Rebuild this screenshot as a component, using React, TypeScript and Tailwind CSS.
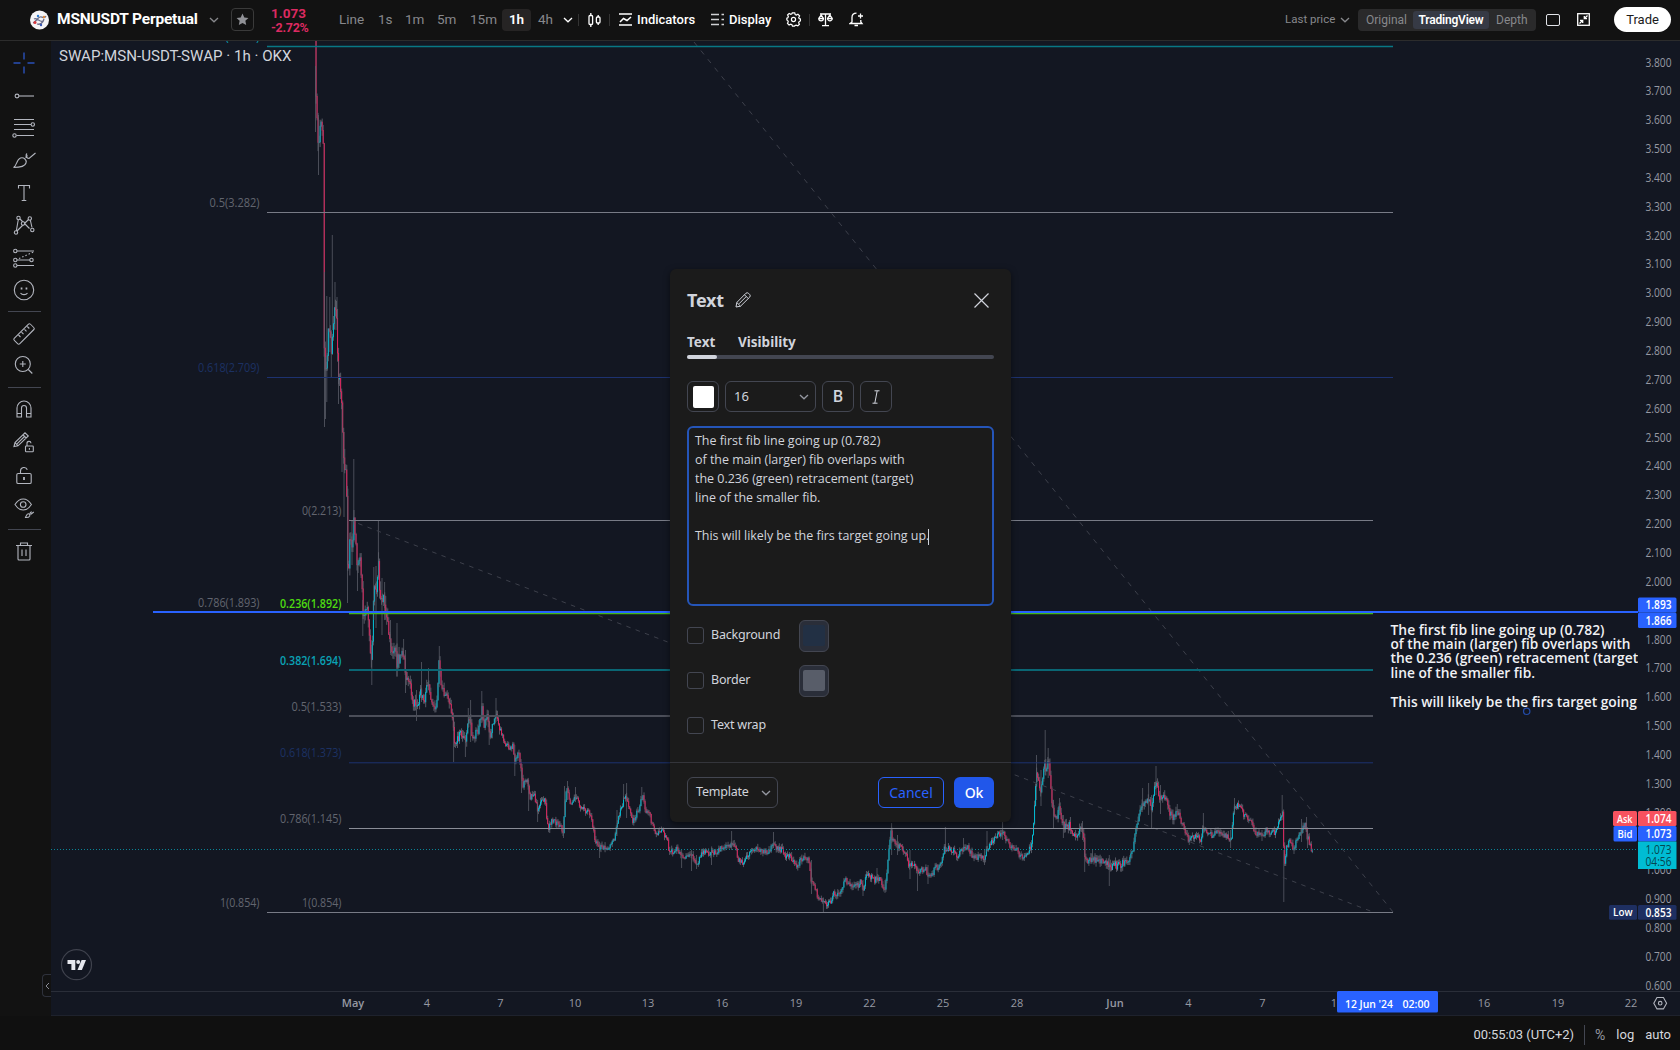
import React from 'react';

interface FibLevel {
  label: string;
  y: number;
  color: string;
  textColor: string;
  width?: number;
  bold?: boolean;
}

const LARGE_FIB: FibLevel[] = [
  { label: '0.382(3.854)', y: 46.5, color: '#087785', textColor: '#0a9fb1', width: 1.6 },
  { label: '0.5(3.282)', y: 212.5, color: '#787b86', textColor: '#62656f' },
  { label: '0.618(2.709)', y: 377.5, color: '#1d3270', textColor: '#1c3162' },
  { label: '0.786(1.893)', y: 612.5, color: '#131722', textColor: '#62656f' },
  { label: '1(0.854)', y: 912.5, color: '#787b86', textColor: '#62656f' },
];

const SMALL_FIB: FibLevel[] = [
  { label: '0(2.213)', y: 520.5, color: '#787b86', textColor: '#62656f' },
  { label: '0.236(1.892)', y: 613.5, color: '#43b81a', textColor: '#4ddb10', bold: true, width: 1.4 },
  { label: '0.382(1.694)', y: 670, color: '#0a6674', textColor: '#0aa2b5', width: 1.8, bold: true },
  { label: '0.5(1.533)', y: 716, color: '#4b4e59', textColor: '#62656f', width: 1.8 },
  { label: '0.618(1.373)', y: 762.8, color: '#1d3270', textColor: '#1c3162' },
  { label: '0.786(1.145)', y: 828.5, color: '#8a8d97', textColor: '#62656f' },
  { label: '1(0.854)', y: 912.5, color: '#787b86', textColor: '#62656f' },
];

// x / y pairs the price runs through
const PATH: number[] = [
  315, 20, 316, 98, 317, 115, 318.5, 144, 320, 122, 322, 121, 323.3, 150, 323.6, 281, 324.5, 380, 327, 360, 328, 335, 330, 326,
  331, 352, 333, 325, 335, 308, 336, 307, 337, 326, 338, 375, 340, 380, 342, 405, 343, 442, 344.5, 465, 346, 463, 347, 505,
  348, 575, 350, 542, 352, 552, 354, 522, 356, 550, 358, 568, 360, 555, 361.5, 575, 363, 615, 365, 610, 366.5, 605, 368, 612,
  370, 640, 371.3, 662, 373, 620, 374, 585, 376, 592, 378.5, 562, 380, 605, 382, 595, 385, 605, 387, 620, 390, 640, 393, 655,
  395, 645, 397, 662, 400, 655, 404, 653, 406, 680, 410, 678, 413, 710, 415, 700, 418, 705, 420, 692, 424, 702, 428, 680,
  431, 700, 435, 705, 437, 700, 439, 660, 441, 680, 444, 692, 449, 702, 453, 718, 454, 740, 457, 738, 461, 735, 465, 742,
  469, 715, 472, 735, 477, 733, 480, 722, 482, 708, 484, 725, 487, 715, 490, 735, 493, 725, 496, 716, 500, 728, 505, 742,
  509, 748, 513, 745, 515, 763, 518.5, 750, 521, 770, 523, 785, 527, 780, 530, 797, 534, 795, 538, 810, 541, 798, 545, 800,
  548, 828, 552, 820, 556, 822, 560, 825, 563, 834, 564.5, 808, 566, 790, 567.5, 785, 570, 805, 573, 804, 575.5, 795,
  578, 802, 582, 808, 586, 812, 590, 812, 593, 826, 595, 840, 599, 848, 603, 847, 606, 850, 609, 846, 613, 842, 616, 832,
  618, 818, 622, 805, 625, 795, 628, 803, 632, 820, 635, 818, 639, 808, 642.5, 795, 645, 808, 650, 815, 653, 828, 658, 834,
  661, 830, 667, 838, 669, 851, 673, 852, 676, 848, 680, 852, 684, 856, 688, 858, 691, 852, 694, 860, 697, 865, 701, 853,
  705, 850, 709, 855, 713, 852, 717, 852, 721, 848, 726, 845, 730, 846, 733, 843, 736, 850, 739, 861, 743, 862, 747, 855,
  751, 850, 762, 850, 768, 852, 773, 846, 777, 848, 782, 850, 786, 857, 790, 856, 794, 863, 797, 866, 800, 860, 805, 857,
  809, 860, 811, 882, 815, 887, 819, 900, 825, 904, 830, 902, 834, 893, 838, 893, 842, 890, 845, 880, 849, 883, 858, 886,
  861, 880, 863, 892, 866, 876, 870, 876, 875, 880, 880, 877, 885, 892, 887, 870, 889, 848, 891, 830, 892, 838, 895, 845,
  901, 846, 905, 852, 909, 865, 913, 864, 918, 870, 926, 870, 928, 877, 932, 875, 935, 868, 940, 865, 944, 848, 953, 850,
  958, 856, 963, 849, 968, 848, 973, 856, 984, 858, 987, 848, 993, 840, 998, 835, 1003, 832, 1008, 842, 1013, 848,
  1017, 850, 1022, 858, 1026, 856, 1031, 845, 1033, 830, 1035, 800, 1036, 770, 1037.5, 775, 1040, 792, 1043, 780, 1044.5, 765,
  1047, 772, 1048.5, 760, 1050, 775, 1052, 800, 1054, 815, 1056, 820, 1059, 808, 1062, 822, 1066, 828, 1070, 825, 1074, 835,
  1078, 833, 1082, 828, 1084, 840, 1085, 858, 1089, 860, 1099, 860, 1104, 862, 1108, 863, 1110, 868, 1113, 864, 1118, 866,
  1124, 862, 1130, 857, 1134, 845, 1136, 825, 1139, 818, 1142, 805, 1146, 800, 1150, 802, 1152, 808, 1155, 785, 1157, 782,
  1159, 798, 1162, 800, 1165, 797, 1169, 810, 1174, 818, 1177, 808, 1181, 820, 1185, 832, 1189, 840, 1193, 836, 1197, 834,
  1201, 840, 1203, 828, 1208, 832, 1213, 836, 1217, 830, 1221, 834, 1226, 836, 1231, 840, 1233, 815, 1235, 805, 1239, 806,
  1244, 815, 1250, 818, 1254, 830, 1258, 834, 1262, 835, 1266, 830, 1270, 832, 1276, 833, 1279, 820, 1282, 812, 1283, 816,
  1284, 865, 1287, 845, 1290, 842, 1294, 848, 1298, 838, 1302, 830, 1305, 825, 1307, 835, 1310, 845, 1312.5, 852,
];

// long single wicks: x, top, bottom
const SPIKES: number[][] = [
  [315.5, 66, 132], [318.5, 115, 175], [324.5, 272, 427], [325.5, 357, 419], [326.8, 296, 402], [329.8, 297, 352], [332.3, 235, 330],
  [331.3, 330, 377], [335, 282, 330], [337, 297, 330], [338.5, 361, 404], [342, 405, 472], [344, 432, 517], [347.5, 486, 603],
  [353.8, 459, 525], [352, 520, 565], [357.5, 560, 591], [362.8, 600, 636], [371.8, 640, 685], [373.8, 567, 620], [376, 566, 628],
  [378.4, 521, 580], [382, 578, 635], [384.6, 582, 620], [390.5, 620, 653], [397, 623, 677], [405.5, 650, 693], [403.6, 639, 655],
  [416.5, 690, 721], [421.5, 662, 702], [428.5, 668, 690], [439.3, 646, 670], [453.6, 715, 762], [465.4, 735, 757], [468.3, 708, 728],
  [470.6, 700, 742], [481.8, 691, 720], [489.2, 715, 745], [496, 698, 722], [514.8, 745, 776], [521.5, 770, 793], [528.6, 780, 811],
  [537.6, 800, 822], [563.5, 820, 838], [564.5, 786, 815], [567.5, 781, 800], [575.5, 787, 800], [599.6, 842, 858], [617, 810, 836],
  [623.6, 784, 800], [626.6, 783, 818], [641.8, 787, 800], [681.6, 850, 868], [691.5, 850, 871], [696.5, 855, 869], [711.5, 848, 865],
  [731.6, 831, 850], [773.5, 832, 848], [811.5, 860, 894], [823.4, 900, 912], [863, 880, 896], [877, 868, 882], [885, 880, 893],
  [891.6, 823, 855], [897.5, 835, 855], [910, 850, 879], [917.5, 868, 891], [928, 865, 884], [945.4, 827, 850], [963.5, 838, 852],
  [984.5, 850, 865], [987, 831, 852], [1002.6, 822, 840], [1036.5, 755, 800], [1045.2, 730, 775], [1048.2, 748, 778], [1041, 770, 806],
  [1053.5, 800, 829], [1059.5, 798, 815], [1063.4, 815, 838], [1082.5, 821, 840], [1084.7, 840, 872], [1092.5, 850, 862],
  [1109.3, 855, 886], [1142.6, 788, 810], [1148.6, 783, 815], [1151.6, 795, 829], [1156, 766, 795], [1160.5, 785, 814],
  [1177.3, 804, 812], [1189.3, 835, 845], [1203.4, 813, 832], [1230.6, 830, 848], [1234.5, 798, 815], [1262, 830, 841],
  [1282.2, 795, 820], [1283.8, 850, 902], [1294, 845, 854], [1301.5, 819, 842], [1306.5, 817, 832], [1307.5, 830, 848],
];

interface Candle {
  x: number;
  open: number;
  close: number;
  high: number;
  low: number;
}

const buildCandles = (): Candle[] => {
  let seed = 77;
  const random = () => {
    seed = (seed * 16807) % 2147483647;
    return seed / 2147483647;
  };
  const candles: Candle[] = [];
  let i = 0;
  let open = PATH[1];
  for (let x = PATH[0]; x <= 1312.5; x += 1.025) {
    while (i < PATH.length - 4 && PATH[i + 2] <= x) i += 2;
    const t = Math.min(1, (x - PATH[i]) / (PATH[i + 2] - PATH[i]));
    const mid = PATH[i + 1] + (PATH[i + 3] - PATH[i + 1]) * t;
    const amp = x < 400 ? 9 : x < 500 ? 6 : x > 1030 && x < 1180 ? 5 : 3.8;
    const close = mid + (random() - 0.5) * amp * 1.5;
    candles.push({
      x,
      open,
      close,
      high: Math.min(open, close) - random() * amp,
      low: Math.max(open, close) + random() * amp,
    });
    open = close;
  }
  return candles;
};

const CANDLES = buildCandles();

const PRICES = Array.from({ length: 33 }, (_, i) => ({
  label: (3.8 - i * 0.1).toFixed(3),
  y: 62.3 + i * 28.85,
})).filter((p) => p.label !== '1.900' && p.label !== '1.100');

const DATES: [string, number][] = [
  ['May', 353], ['4', 427], ['7', 500.5], ['10', 575], ['13', 648], ['16', 722], ['19', 796], ['22', 869.5], ['25', 943],
  ['28', 1017], ['Jun', 1115], ['4', 1188.5], ['7', 1262.5], ['10', 1337], ['16', 1484], ['19', 1558], ['22', 1631],
];

const NOTE = [
  { text: 'The first fib line going up (0.782)', y: 634.8, width: 214 },
  { text: 'of the main (larger) fib overlaps with', y: 649, width: 240 },
  { text: 'the 0.236 (green) retracement (target)', y: 663.4, width: 252 },
  { text: 'line of the smaller fib.', y: 677.8, width: 144.5 },
  { text: 'This will likely be the firs target going', y: 706.6, width: 246.5 },
];

const Chevron: React.FC<{ className?: string }> = ({ className }) => (
  <svg className={className} width="10" height="6" viewBox="0 0 10 6" fill="none" stroke="currentColor" strokeWidth="1.3">
    <path d="M1 1l4 3.8L9 1" />
  </svg>
);

const FibLabels: React.FC<{ levels: FibLevel[]; x: number }> = ({ levels, x }) => (
  <g fontSize="12" textAnchor="end">
    {levels.map((l) => (
      <text
        key={l.label}
        x={x}
        y={l.y - 5.4}
        fill={l.textColor}
        fontWeight={l.bold ? 600 : 400}
        textLength={l.label.length === 12 ? 61.5 : l.label.length === 10 ? 50 : 39.5}
        lengthAdjust="spacingAndGlyphs"
      >
        {l.label}
      </text>
    ))}
  </g>
);

const PriceTag: React.FC<{ y: number; h: number; fill: string; value: string; name?: string; nameX?: number }> = ({ y, h, fill, value, name, nameX = 0 }) => (
  <g fontSize="12" fontWeight="600" fill="#fff">
    <rect x="1638" y={y} width="38.5" height={h} rx="1.5" fill={fill} />
    <text x="1645.5" y={y + h / 2 + 4.3} textLength="26" lengthAdjust="spacingAndGlyphs">{value}</text>
    {name && (
      <>
        <rect x={nameX} y={y} width={1637 - nameX} height={h} rx="1.5" fill={fill} />
        <text x={nameX + 4} y={y + h / 2 + 4} fontSize="11.5" textLength={1637 - nameX - 8.5} lengthAdjust="spacingAndGlyphs">{name}</text>
      </>
    )}
  </g>
);

const Chart: React.FC = () => (
  <svg
    className="block"
    width="1629"
    height="975"
    viewBox="51 41 1629 975"
    fontFamily="'Open Sans', 'Noto Sans', sans-serif"
  >
    <defs>
      <clipPath id="pane">
        <rect x="51" y="41" width="1587" height="950" />
      </clipPath>
    </defs>
    <rect x="51" y="41" width="1629" height="975" fill="#131722" />
    <g clipPath="url(#pane)">
      {CANDLES.map((c, i) => (
        <g key={i}>
          <line x1={c.x} x2={c.x} y1={c.high} y2={c.low} stroke="#5d606b" strokeWidth="0.9" />
          <line
            x1={c.x}
            x2={c.x}
            y1={Math.min(c.open, c.close)}
            y2={Math.max(c.open, c.close) + 0.6}
            stroke={c.close > c.open ? '#e0245e' : '#00bcd4'}
            strokeWidth="1"
          />
        </g>
      ))}
      {SPIKES.map(([x, top, bottom]) => (
        <line key={`${x}-${top}`} x1={x} x2={x} y1={top} y2={bottom} stroke="#5d606b" strokeWidth="1" opacity="0.75" />
      ))}
      <g stroke="#3d404b" strokeDasharray="4.5 5.4">
        <line x1="349" y1="520" x2="1373" y2="912" />
        <line x1="694" y1="42" x2="1393" y2="912" strokeDasharray="5 6" />
      </g>
      {LARGE_FIB.map((l) => (
        <line key={l.label} x1="267" x2="1393" y1={l.y} y2={l.y} stroke={l.color} strokeWidth={l.width ?? 1} />
      ))}
      {SMALL_FIB.map((l) => (
        <line key={l.label} x1="349" x2="1373" y1={l.y} y2={l.y} stroke={l.color} strokeWidth={l.width ?? 1} />
      ))}
      <line x1="153" x2="1638" y1="612" y2="612" stroke="#2962ff" strokeWidth="2" />
      <line x1="51" x2="1638" y1="849.5" y2="849.5" stroke="#0b8496" strokeDasharray="1 2" />
      <FibLabels levels={LARGE_FIB} x={259.5} />
      <FibLabels levels={SMALL_FIB} x={341.5} />
      <g fill="#f0f1f4" fontSize="14" fontWeight="600">
        {NOTE.map((n) => (
          <text key={n.y} x="1390.5" y={n.y} textLength={n.width} lengthAdjust="spacingAndGlyphs">{n.text}</text>
        ))}
      </g>
      <circle cx="1526.7" cy="711.3" r="3.2" fill="#131722" stroke="#234ba8" strokeWidth="1.2" />
    </g>

    <text x="59" y="60.8" fontSize="15.5" fill="#d1d4dc" fontFamily="Roboto, sans-serif" textLength="232.5" lengthAdjust="spacingAndGlyphs">
      SWAP:MSN-USDT-SWAP · 1h · OKX
    </text>

    <circle cx="76.5" cy="964.7" r="15" fill="#131722" stroke="#3f424d" strokeWidth="1.2" />
    <path d="M67.5 960h7.8v10h-3.9v-6h-3.9z" fill="#e6e8ee" />
    <circle cx="78.2" cy="962" r="2" fill="#e6e8ee" />
    <path d="M81.6 960h4.4l-4.1 10h-4.4z" fill="#e6e8ee" />

    <g fontSize="12" fill="#9699a3">
      {PRICES.map((p) => (
        <text key={p.label} x="1645.5" y={p.y + 4.2} textLength="26" lengthAdjust="spacingAndGlyphs">{p.label}</text>
      ))}
    </g>
    <PriceTag y={597.5} h={15} fill="#2962ff" value="1.893" />
    <PriceTag y={612.5} h={15.5} fill="#2962ff" value="1.866" />
    <PriceTag y={811} h={15} fill="#f7525f" value="1.074" name="Ask" nameX={1613} />
    <PriceTag y={826} h={15.5} fill="#2962ff" value="1.073" name="Bid" nameX={1613.5} />
    <g fontSize="12" fill="#06454f">
      <rect x="1638" y="841.5" width="38.5" height="27.5" fill="#00bcd4" />
      <text x="1645.5" y="853.6" textLength="26" lengthAdjust="spacingAndGlyphs">1.073</text>
      <text x="1645.5" y="866.2" textLength="26" lengthAdjust="spacingAndGlyphs">04:56</text>
    </g>
    <PriceTag y={905} h={14.7} fill="#1e2f61" value="0.853" name="Low" nameX={1609} />

    <path d="M51 991.5H1680M51 1016H1680" stroke="#2a2e39" />
    <g fontSize="11" fill="#9699a3" textAnchor="middle">
      {DATES.map(([d, x]) => (
        <text key={x} x={x} y="1007" fontWeight={d === 'May' || d === 'Jun' ? 600 : 400}>{d}</text>
      ))}
    </g>
    <rect x="1337" y="991" width="101" height="21.5" rx="1.5" fill="#2962ff" />
    <g fontSize="11.5" fontWeight="600" fill="#fff">
      <text x="1345" y="1008" textLength="48" lengthAdjust="spacingAndGlyphs">12 Jun '24</text>
      <text x="1402.5" y="1008" textLength="27" lengthAdjust="spacingAndGlyphs">02:00</text>
    </g>
    <g fill="none" stroke="#b2b5be" strokeWidth="1.1">
      <path d="M1657 997.5h6.4l3.2 5.7-3.2 5.7H1657l-3.2-5.7z" />
      <circle cx="1660.2" cy="1003.2" r="1.8" />
    </g>
  </svg>
);

const ToolIcon: React.FC<{ className: string; color?: string; children: React.ReactNode }> = ({ className, color = 'text-[#b2b5be]', children }) => (
  <button className={`flex w-full shrink-0 items-center justify-center ${className} ${color}`}>
    <svg width="24" height="24" viewBox="0 0 24 24" fill="none" stroke="currentColor" strokeWidth="1.1">
      {children}
    </svg>
  </button>
);

const Separator: React.FC<{ className: string }> = ({ className }) => <div className={`h-px w-[33px] shrink-0 bg-[#434651] ${className}`} />;

const Sidebar: React.FC = () => (
  <aside className="relative flex w-[51px] shrink-0 flex-col items-center bg-[#121212] pt-1.5 pr-[3px]">
    <ToolIcon className="h-[32.4px]" color="text-[#2a50b8]">
      <path d="M12 1.5v7M12 15.5v7M1.5 12h7M15.5 12h7" strokeWidth="1.4" />
    </ToolIcon>
    <ToolIcon className="h-[32.4px]">
      <circle cx="5" cy="12" r="1.9" />
      <path d="M7 12h15" />
    </ToolIcon>
    <ToolIcon className="h-[32.4px]">
      <path d="M2 3.5h20M2 8.5h17M2 13.5h20M4.5 19.500H22" />
      <circle cx="20.8" cy="8.5" r="1.7" />
      <circle cx="2.5" cy="19.5" r="1.7" />
    </ToolIcon>
    <ToolIcon className="h-[32.4px]">
      <path d="M1.5 19.5c3-1 3-8 7-9.5 3.5-1 6.500 2 5.500 5-1 3.500-5 4.500-12.500 4.500z" />
      <path d="M15 5.500c-2 2-.5 5 2 5l6.500-5.500M13.500 9.500l2-2" />
    </ToolIcon>
    <ToolIcon className="h-[32.4px]">
      <path d="M6.500 7.500V4.500h11v3M12 4.500v15M9.700 19.500h4.600" />
    </ToolIcon>
    <ToolIcon className="h-[32.4px]">
      <path d="M4.300 18L6.300 6.500M8 6l9.500 9.500M16.500 6.500L5 18M18.300 7l1.700 7.500" />
      <circle cx="6.5" cy="5" r="1.7" fill="#121212" />
      <circle cx="17.8" cy="5.5" r="1.7" fill="#121212" />
      <circle cx="11" cy="10.5" r="1.7" fill="#121212" />
      <circle cx="4" cy="19.5" r="1.7" fill="#121212" />
      <circle cx="20.3" cy="17" r="1.7" fill="#121212" />
    </ToolIcon>
    <ToolIcon className="h-[32.4px]">
      <path d="M5 5h17M5 14h13M5 19.500h17" />
      <path d="M7 12.500L21.500 6" strokeDasharray="1.5 2" />
      <circle cx="3.3" cy="5" r="1.7" />
      <circle cx="3.3" cy="14" r="1.7" />
      <circle cx="19.5" cy="14" r="1.7" />
      <circle cx="3.3" cy="19.5" r="1.7" />
    </ToolIcon>
    <ToolIcon className="h-[32.4px]">
      <circle cx="12" cy="12" r="9.7" />
      <path d="M8.500 15c1.500 2.200 5.500 2.200 7 0" />
      <path d="M8.700 10.500h1.700M13.600 10.500h1.700" strokeWidth="1.8" />
    </ToolIcon>
    <Separator className="mt-[5px] mb-1.5" />
    <ToolIcon className="h-[31px]">
      <rect x="-1" y="8.2" width="26" height="7.6" rx="1.5" transform="rotate(-45 12 12) translate(1.5 0) scale(.88 1)" />
      <path d="M6.500 13l2 2M9.500 10.200l2 2M12.500 7.300l2 2M15.300 4.500l2 2" />
    </ToolIcon>
    <ToolIcon className="h-[31px]">
      <circle cx="10.8" cy="11" r="7.5" />
      <path d="M16.300 16.500l4 4M7.800 11h6M10.800 8v6" />
    </ToolIcon>
    <Separator className="mt-[7px] mb-1" />
    <ToolIcon className="h-[33px]">
      <path d="M5 20V11a7 7 0 0 1 14 0v9h-4.500v-9a2.500 2.500 0 0 0-5 0v9zM5 16.500h4.500M14.500 16.500H19" />
    </ToolIcon>
    <ToolIcon className="h-[33px]">
      <path d="M2 16.500l1-4L13 2.800l3.300 3.200L6 15.800zM3 12.500l3 3.300M11 4.800l3.200 3.200M5 13.800l8-7.800" />
      <rect x="13.5" y="16" width="7.8" height="5.8" rx=".8" />
      <path d="M15 16v-2.500a2 2 0 0 1 4-.3M17.400 18v1.800" />
    </ToolIcon>
    <ToolIcon className="h-[33px]">
      <rect x="4.8" y="10.5" width="14.4" height="10" rx="1.3" />
      <path d="M8.500 10.500V8a3.500 3.500 0 0 1 6.800-1.200" />
      <path d="M12 14v3" strokeWidth="1.8" />
    </ToolIcon>
    <ToolIcon className="h-[33px]">
      <path d="M3 8.500C5.500 4.500 8 3 11.200 3s5.700 1.500 8.200 5.500c-2.500 4-5 5.500-8.200 5.500S5.500 12.500 3 8.500z" />
      <circle cx="11.2" cy="8.5" r="2.8" />
      <path d="M13 21.500c1.300-.3 1.200-3.500 3.200-3.700 1.300-.1 2 1.200 1.400 2.400-.7 1.200-2.500 1.500-4.600 1.300zM18 17.800c0-1.500 1-1 1.500-2.300M18.500 18.500l3.300-2.500" />
    </ToolIcon>
    <Separator className="mt-[5px] mb-[5px]" />
    <ToolIcon className="h-8">
      <path d="M4 6.500h16M8.500 6.500V4h7v2.500M6 6.500v13.500a1 1 0 0 0 1 1h10a1 1 0 0 0 1-1V6.500M10 10.500v6.500M14 10.500v6.500" />
    </ToolIcon>
    <div className="absolute right-0 bottom-[19px] flex h-[23px] w-[9px] items-center justify-center rounded-l border border-r-0 border-[#2e313b] text-[#8a8d97]">
      <svg width="5" height="8" viewBox="0 0 5 8" fill="none" stroke="currentColor"><path d="M4 1L1 4l3 3" /></svg>
    </div>
  </aside>
);

const Divider: React.FC<{ className: string }> = ({ className }) => <div className={`h-3 w-px bg-[#333] ${className}`} />;

const Header: React.FC = () => (
  <header className="flex h-[41px] items-center border-b border-[#2c2c2c] bg-[#121212] pb-px pl-[30px] pr-[9px] text-[13px] text-[#87888c]">
    <svg width="19" height="20" viewBox="0 0 19 20">
      <circle cx="9.5" cy="10" r="9.5" fill="#f4f4f6" />
      <path d="M3 13c3-1 4-5 7-6s4 3 6-1M4 9c3-2 6 4 9 2M7 14c3 1 6-1 7-5" fill="none" stroke="#6b6f8c" strokeWidth="1.3" />
      <circle cx="5" cy="12.5" r="1.5" fill="#d9363e" />
      <circle cx="8" cy="6" r="1.2" fill="#2a7bd1" />
      <circle cx="14" cy="7" r="1.2" fill="#e08a3c" />
      <circle cx="11" cy="15" r="1.2" fill="#3757b5" />
    </svg>
    <h1 className="ml-[8px] w-[143px] whitespace-nowrap text-[15.5px] font-bold tracking-[-0.18px] text-white">MSNUSDT Perpetual</h1>
    <Chevron className="ml-[9px]" />
    <button className="ml-3 flex h-[23px] w-[23px] items-center justify-center rounded border border-[#3a3a3a] text-[#909196]">
      <svg width="13" height="13" viewBox="0 0 24 24" fill="currentColor"><path d="M12 1l3.300 7.200 7.700.9-5.700 5.300 1.500 7.800L12 18.300l-6.800 3.900 1.500-7.800L1 9.100l7.700-.9z" /></svg>
    </button>
    <div className="ml-[17px] flex w-[68px] flex-col font-bold text-[#dc2a61]">
      <span className="text-[13.5px] leading-4">1.073</span>
      <span className="text-[12.5px] leading-[14px] tracking-tight">-2.72%</span>
    </div>
    <nav className="flex items-center text-[13.5px]">
      <span className="w-[39px]">Line</span>
      <span className="w-[27px]">1s</span>
      <span className="w-8">1m</span>
      <span className="w-[33px]">5m</span>
      <span className="w-8">15m</span>
      <span className="flex h-[22px] w-[29px] items-center justify-center rounded bg-[#262424] font-semibold text-white">1h</span>
      <span className="ml-[7px] w-[25px]">4h</span>
    </nav>
    <Chevron className="text-white" />
    <Divider className="ml-[5px]" />
    <svg className="ml-[9px] text-white" width="13" height="14" viewBox="0 0 13 14" fill="none" stroke="currentColor" strokeWidth="1.3">
      <rect x="1" y="2.5" width="3.6" height="9" rx="1" />
      <path d="M2.800 0v2.500M2.800 11.500V14M10.200 2v2M10.200 10v2" />
      <rect x="8.4" y="4" width="3.6" height="6" rx="1" />
    </svg>
    <Divider className="ml-2" />
    <svg className="ml-[9px] text-white" width="13" height="13" viewBox="0 0 13 13" fill="none" stroke="currentColor" strokeWidth="1.5">
      <path d="M0 1h13M0 12h13M1 9l3.500-3.500 3.500 2L12 4" />
    </svg>
    <span className="ml-[5px] w-[60px] font-medium text-white">Indicators</span>
    <svg className="ml-[14px] text-[#d0d1d4]" width="13" height="13" viewBox="0 0 13 13" fill="none" stroke="currentColor" strokeWidth="1.5">
      <path d="M0 1.500h8M0 6.500h8M0 11.500h8M10.500 1.500H13M10.500 6.500H13M10.500 11.500H13" />
    </svg>
    <span className="ml-[5px] w-[44px] font-medium text-white">Display</span>
    <svg className="ml-[13px] text-white" width="15" height="15" viewBox="0 0 16 16" fill="none" stroke="currentColor" strokeWidth="1.3">
      <path d="M6.700 1h2.600l.5 1.800 1.200.5 1.700-.9 1.800 1.800-.9 1.700.5 1.200 1.400.4v1.900l-1.500.8-.5 1.200.8 1.700-1.700 1.700-1.800-.8-1.200.5L9.100 15H6.900l-.6-1.500-1.200-.5-1.800.8-1.700-1.700.8-1.700-.5-1.200-1-.7V6.600l1.100-.5.5-1.200-.8-1.700 1.700-1.700 1.700.9 1.200-.5z" />
      <circle cx="8" cy="8" r="2.2" />
    </svg>
    <Divider className="ml-2" />
    <svg className="ml-2 text-white" width="15" height="14" viewBox="0 0 15 14" fill="none" stroke="currentColor" strokeWidth="1.3">
      <path d="M2 1h11M7.500 1v11.500M4 12.700h7M.8 5.500h4.700M9.500 5.500h4.700" />
      <path d="M.8 5.500a2.300 2.300 0 1 0 4.600 0L3.200 2zM9.600 5.500a2.300 2.300 0 1 0 4.600 0L11.800 2z" />
    </svg>
    <svg className="ml-4 text-white" width="15" height="15" viewBox="0 0 15 15" fill="none" stroke="currentColor" strokeWidth="1.3">
      <path d="M7.500 1.200C4.800 1.200 3 3 3 5.500V10L1 11.500h12L11.800 10V8M5.500 13.500h3.500M11.500 1.500v5M9 4h5" />
    </svg>
    <div className="ml-auto flex items-center text-xs">
      <span className="w-[55px] text-[11.5px]">Last price</span>
      <Chevron />
      <div className="ml-2 flex h-[22px] w-[178px] items-center rounded bg-[#2a2a2b] text-[12px]">
        <span className="w-[55px] pl-2">Original</span>
        <span className="flex h-[18px] w-[76px] items-center justify-center rounded-[3px] bg-[#363a45] font-semibold tracking-[-0.2px] text-white">TradingView</span>
        <span className="pl-[7px]">Depth</span>
      </div>
      <div className="ml-2.5 h-3 w-3.5 shrink-0 rounded-[2px] border-[1.5px] border-[#e1e3e8]" />
      <svg className="ml-[17px] text-white" width="13" height="13" viewBox="0 0 13 13" fill="none" stroke="currentColor" strokeWidth="1.3">
        <rect x=".7" y=".7" width="11.6" height="11.6" />
        <path d="M10.500 2.500L7.500 5.500M7.300 3v2.700H10M2.500 10.500l3-3M3 7.300h2.700V10" />
      </svg>
      <button className="ml-6 h-[25px] w-[57px] rounded-full bg-white text-[13px] text-[#1b1b1b]">Trade</button>
    </div>
  </header>
);

const TextDialog: React.FC = () => (
  <div className="absolute top-[269px] left-[670px] flex h-[553px] w-[341px] flex-col rounded-md bg-[#1b1b1b] font-['Noto_Sans',sans-serif] text-[12.5px] tracking-[-0.2px] text-[#d1d4dc] shadow-[0_2px_6px_rgba(0,0,0,0.5)]">
    <div className="flex h-[61px] items-center pt-px pl-[17px] pr-[22px]">
      <h2 className="w-[48px] text-[18px] font-bold">Text</h2>
      <svg width="16" height="16" viewBox="0 0 16 16" fill="none" stroke="currentColor" strokeWidth="1">
        <path d="M1 15l.8-4.500L11 1.200q1.300-1 2.600.2l1 1q1.200 1.300.2 2.600L5.500 14.200zM9.500 2.800l3.700 3.700M1.800 10.500l3.700 3.700M4 11.800l7.300-7.300" />
      </svg>
      <svg className="ml-auto" width="15" height="15" viewBox="0 0 15 15" stroke="currentColor" strokeWidth="1.2">
        <path d="M.5.5l14 14M14.500.5l-14 14" />
      </svg>
    </div>
    <div className="mx-[17px] mb-px flex h-6 items-center text-[13.5px] font-bold tracking-normal">
      <span className="w-[51px]">Text</span>
      <span>Visibility</span>
    </div>
    <div className="mx-[17px] h-1 rounded-full bg-[#434651]">
      <div className="h-1 w-[30px] rounded-full bg-[#d1d4dc]" />
    </div>
    <div className="mx-[17px] mt-[22px] flex h-[31px] gap-1.5">
      <div className="flex w-8 items-center justify-center rounded-md border border-[#434651]">
        <div className="h-[22px] w-[21px] rounded-[2px] bg-white" />
      </div>
      <div className="flex w-[91px] items-center justify-between rounded-md border border-[#434651] px-2 pr-1.5">
        <span className="text-[13px] tracking-normal">16</span>
        <Chevron className="text-[#9598a1]" />
      </div>
      <div className="flex w-8 items-center justify-center rounded-md border border-[#434651] font-[Roboto,sans-serif] text-[16px] font-medium">B</div>
      <div className="flex w-8 items-center justify-center rounded-md border border-[#434651]">
        <svg width="8" height="14" viewBox="0 0 8 14" fill="none" stroke="currentColor" strokeWidth="1">
          <path d="M2.500.8h5M.5 13.200h5M5.200.8L2.800 13.200" />
        </svg>
      </div>
    </div>
    <div className="mx-[17px] mt-3.5 h-[180px] rounded-md border-2 border-[#2555b8] px-1.5 pt-[3px] font-['Open_Sans',sans-serif] text-[12.5px] leading-[19px] tracking-[-0.03px] whitespace-pre">
      The first fib line going up (0.782){'\n'}
      of the main (larger) fib overlaps with{'\n'}
      the 0.236 (green) retracement (target){'\n'}
      line of the smaller fib.{'\n\n'}
      This will likely be the firs target going up.
      <span className="-ml-px inline-block h-4 w-px bg-[#d1d4dc] align-middle" />
    </div>
    <div className="mx-[17px] mt-[7px] flex flex-col">
      {['Background', 'Border', 'Text wrap'].map((label) => (
        <div key={label} className="flex h-[45px] items-center">
          <span className="h-[17px] w-[17px] rounded-[3px] border border-[#434651]" />
          <span className="ml-[7px] w-[88px]">{label}</span>
          {label !== 'Text wrap' && (
            <span className="flex h-8 w-[30px] items-center justify-center rounded-md border border-[#434651] bg-[#2a2e39]">
              <span className={label === 'Border' ? 'h-[21px] w-[22px] rounded-[2px] bg-[#585d69]' : 'h-[21px] w-[22px] rounded-[2px] bg-[#223044]'} />
            </span>
          )}
        </div>
      ))}
    </div>
    <div className="mt-auto flex h-[60px] items-center border-t border-[#34353b] px-[17px]">
      <button className="flex h-[31px] w-[91px] items-center justify-between rounded-md border border-[#434651] pr-1.5 pl-2">
        Template
        <Chevron className="text-[#9598a1]" />
      </button>
      <button className="ml-auto h-[31px] w-[66px] rounded-md border border-[#2962ff] text-sm tracking-normal text-[#2962ff]">Cancel</button>
      <button className="ml-2.5 h-[31px] w-10 rounded-md bg-[#2157ea] text-sm font-medium text-white">Ok</button>
    </div>
  </div>
);

const App: React.FC = () => (
  <div className="relative flex h-[1050px] w-[1680px] flex-col overflow-hidden bg-[#121212] font-[Roboto,sans-serif]">
    <Header />
    <div className="flex h-[975px]">
      <Sidebar />
      <main className="min-w-0 flex-1">
        <Chart />
      </main>
    </div>
    <footer className="flex h-[34px] items-center justify-end bg-[#101010] pt-[3px] pr-[9px] text-[13px] text-[#d5d7dc]">
      <span className="tracking-[-0.05px]">00:55:03 (UTC+2)</span>
      <span className="mx-2.5 h-5 w-px bg-[#434651]" />
      <span className="text-sm text-[#9598a1]">%</span>
      <span className="ml-[11px]">log</span>
      <span className="ml-[11px]">auto</span>
    </footer>
    <TextDialog />
  </div>
);

export default App;
